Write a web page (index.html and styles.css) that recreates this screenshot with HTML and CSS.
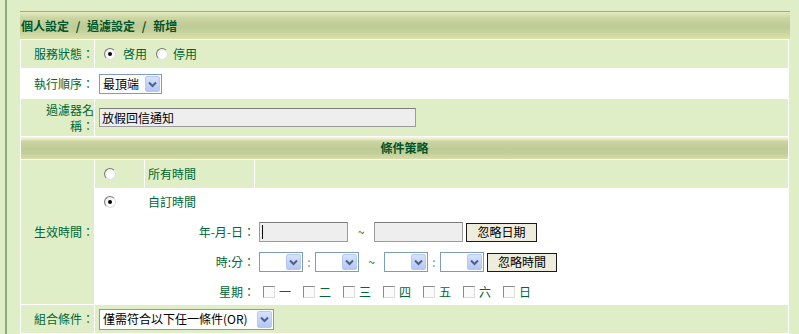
FILE: index.html
```html
<!DOCTYPE html>
<html lang="zh-Hant">
<head>
    <meta charset="UTF-8">
    <title>過濾設定 - 新增</title>
    <link rel="stylesheet" href="styles.css">
</head>
<body>
<div class="page">
  <div class="panel">
    <div class="title">個人設定 / 過濾設定 / 新增</div>

    <div class="form">
      <!-- 服務狀態 -->
      <div class="label">服務狀態：</div>
      <div class="value">
        <span class="radio checked"></span><span class="opt">啓用</span>
        <span class="radio second"></span><span class="opt near">停用</span>
      </div>

      <!-- 執行順序 -->
      <div class="label white">執行順序：</div>
      <div class="value white">
        <span class="select order"><span class="val">最頂端</span><span class="drop"><svg width="13" height="14" viewBox="0 0 13 14"><path d="M3 5.5 L6.5 9 L10 5.5" fill="none" stroke="#4d6185" stroke-width="2"/></svg></span></span>
      </div>

      <!-- 名稱 -->
      <div class="label">過濾器名稱：</div>
      <div class="value">
        <input class="name" type="text" value="放假回信通知">
      </div>

      <div class="section">條件策略</div>

      <!-- 生效時間 -->
      <div class="label">生效時間：</div>
      <div class="times">
        <div class="cell pick"><span class="radio"></span></div>
        <div class="cell text">所有時間</div>
        <div class="cell"></div>

        <div class="cell pick custom-pick"><span class="radio checked"></span></div>
        <div class="custom-body">
          <div class="custom-title">自訂時間</div>
          <div class="rows">
            <div class="row-label">年-月-日：</div>
            <div class="controls">
              <span class="caret-wrap"><input class="date" type="text"></span>
              <span class="tilde">~</span>
              <input class="date" type="text">
              <button class="btn">忽略日期</button>
            </div>

            <div class="row-label">時:分：</div>
            <div class="controls">
              <span class="select time"><span class="val"></span><span class="drop"><svg width="13" height="14" viewBox="0 0 13 14"><path d="M3 5.5 L6.5 9 L10 5.5" fill="none" stroke="#4d6185" stroke-width="2"/></svg></span></span>
              <span class="colon">:</span>
              <span class="select time"><span class="val"></span><span class="drop"><svg width="13" height="14" viewBox="0 0 13 14"><path d="M3 5.5 L6.5 9 L10 5.5" fill="none" stroke="#4d6185" stroke-width="2"/></svg></span></span>
              <span class="tilde short">~</span>
              <span class="select time"><span class="val"></span><span class="drop"><svg width="13" height="14" viewBox="0 0 13 14"><path d="M3 5.5 L6.5 9 L10 5.5" fill="none" stroke="#4d6185" stroke-width="2"/></svg></span></span>
              <span class="colon">:</span>
              <span class="select time"><span class="val"></span><span class="drop"><svg width="13" height="14" viewBox="0 0 13 14"><path d="M3 5.5 L6.5 9 L10 5.5" fill="none" stroke="#4d6185" stroke-width="2"/></svg></span></span>
              <button class="btn narrow">忽略時間</button>
            </div>

            <div class="row-label">星期：</div>
            <div class="controls week">
              <span class="day"><span class="check"></span>一</span>
              <span class="day"><span class="check"></span>二</span>
              <span class="day"><span class="check"></span>三</span>
              <span class="day"><span class="check"></span>四</span>
              <span class="day"><span class="check"></span>五</span>
              <span class="day"><span class="check"></span>六</span>
              <span class="day"><span class="check"></span>日</span>
            </div>
          </div>
        </div>
      </div>

      <!-- 組合條件 -->
      <div class="label">組合條件：</div>
      <div class="value">
        <span class="select combo"><span class="val">僅需符合以下任一條件(OR)</span><span class="drop"><svg width="13" height="14" viewBox="0 0 13 14"><path d="M3 5.5 L6.5 9 L10 5.5" fill="none" stroke="#4d6185" stroke-width="2"/></svg></span></span>
      </div>
    </div>
  </div>
</div>
</body>
</html>
```

FILE: styles.css
```css
body {
    margin: 0;
    background: #dfeec7;
    font-family: "Noto Sans CJK TC", "Noto Sans", sans-serif;
    font-size: 12px;
    line-height: 16px;
    color: #006633;
}
.page {
    margin-left: 5px;
    border-left: 2px solid #8dab78;
    min-height: 334px;
    padding-top: 11px;
    box-sizing: border-box;
}
.panel {
    margin-left: 13px;
    width: 770px;
}
.title {
    border-top: 1px solid #a3ad7b;
    height: 27px;
    line-height: 27px;
    padding-left: 1px;
    font-weight: bold;
    color: #00552a;
    word-spacing: 4px;
    background: linear-gradient(to bottom, #e6eabf 0%, #cbd5a2 22%, #bdcb95 55%, #c8d39d 75%, #dbe2ac 100%);
}
.form {
    display: grid;
    grid-template-columns: 73px 1fr;
    grid-template-rows: 28px 29px 37px 22px 144px 28px;
    gap: 1px;
    padding: 1px;
    width: 769px;
    box-sizing: border-box;
    background: #fff;
}
.label {
    background: #dfeec7;
    padding-left: 8px;
    display: flex;
    align-items: center;
    justify-content: flex-end;
    text-align: right;
}
.value {
    background: #dfeec7;
    display: flex;
    align-items: center;
    padding-left: 4px;
}
.white {
    background: #fff;
}
.section {
    grid-column: 1 / -1;
    text-align: center;
    line-height: 22px;
    font-weight: bold;
    color: #00552a;
    background: linear-gradient(to bottom, #f3f4d2 0%, #f3f4d2 5%, #cbd5a2 20%, #bdcb95 55%, #c6d19b 80%, #d6dea8 100%);
}

/* radios and checkboxes */
.radio {
    position: relative;
    width: 12px;
    height: 12px;
    box-sizing: border-box;
    border-radius: 50%;
    border: 1px solid;
    border-color: #7a7a7a #e2e2e2 #e2e2e2 #7a7a7a;
    background: radial-gradient(circle at 60% 60%, #fff 40%, #d6d6d6 100%);
    flex: none;
}
.radio.checked::after {
    content: "";
    position: absolute;
    left: 3px;
    top: 3px;
    width: 4px;
    height: 4px;
    border-radius: 50%;
    background: #000;
}
.value .radio {
    margin-left: 5px;
    margin-right: 7px;
}
.value .radio.second {
    margin-left: 9px;
    margin-right: 5px;
}
.check {
    display: inline-block;
    width: 12px;
    height: 12px;
    box-sizing: border-box;
    border: 1px solid;
    border-color: #8a8a8a #dcdcdc #dcdcdc #8a8a8a;
    background: #fbfbfb;
    margin-right: 4px;
}

/* selects */
.select {
    display: inline-flex;
    align-items: center;
    height: 20px;
    box-sizing: border-box;
    border: 1px solid #7f9db9;
    background: #fff;
    color: #000;
}
.select .val {
    flex: 1;
    padding-left: 3px;
    white-space: nowrap;
}
.drop {
    width: 15px;
    height: 16px;
    margin: 1px;
    box-sizing: border-box;
    border: 1px solid #b7c9f3;
    border-radius: 2px;
    background: linear-gradient(to bottom, #d6e2fd, #b3c6f5);
    display: flex;
    align-items: center;
    justify-content: center;
}
.order {
    width: 63px;
}
.combo {
    width: 175px;
    height: 21px;
}
.combo .drop {
    height: 17px;
}
.time {
    width: 44px;
}

/* text inputs */
.name,
.date {
    box-sizing: border-box;
    border: 1px solid #9c9c9c;
    border-top-color: #7c7c7c;
    background: #eeeeee;
    font: inherit;
    color: #000;
    padding: 0 2px;
    margin: 0;
}
.name {
    width: 317px;
    height: 19px;
}
.date {
    width: 89px;
    height: 20px;
}
.caret-wrap {
    position: relative;
    display: inline-flex;
}
.caret-wrap::after {
    content: "";
    position: absolute;
    left: 3px;
    top: 3px;
    width: 1px;
    height: 14px;
    background: #000;
}

/* 生效時間 */
.times {
    display: grid;
    grid-template-columns: 49px 109px 1fr;
    grid-template-rows: 28px 115px;
    gap: 1px;
    background: #fff;
}
.cell {
    background: #dfeec7;
    display: flex;
    align-items: center;
}
.cell.pick {
    padding-left: 9px;
}
.cell.text {
    padding-left: 3px;
}
.custom-pick {
    background: #fff;
    align-items: flex-start;
    padding-top: 7px;
}
.custom-body {
    grid-column: 2 / 4;
    background: #fff;
    padding-top: 5px;
}
.custom-title {
    padding-left: 3px;
}
.rows {
    display: grid;
    grid-template-columns: 110px 1fr;
    grid-auto-rows: 20px;
    row-gap: 10px;
    margin-top: 12px;
}
.row-label {
    text-align: right;
    line-height: 20px;
}
.controls {
    display: flex;
    align-items: center;
    padding-left: 4px;
}
.tilde {
    width: 26px;
    text-align: center;
}
.tilde.short {
    width: 25px;
}
.colon {
    width: 12px;
    text-align: center;
    color: #6f8f7a;
}
.btn {
    width: 71px;
    height: 19px;
    margin-left: 3px;
    padding: 0;
    border: 1px solid #1a1a1a;
    background: #eeecdc;
    font: inherit;
    font-size: 12px;
    color: #000;
}
.btn.narrow {
    width: 70px;
}
.week {
    padding-left: 8px;
}
.day {
    display: inline-flex;
    align-items: center;
    width: 40px;
}
```
